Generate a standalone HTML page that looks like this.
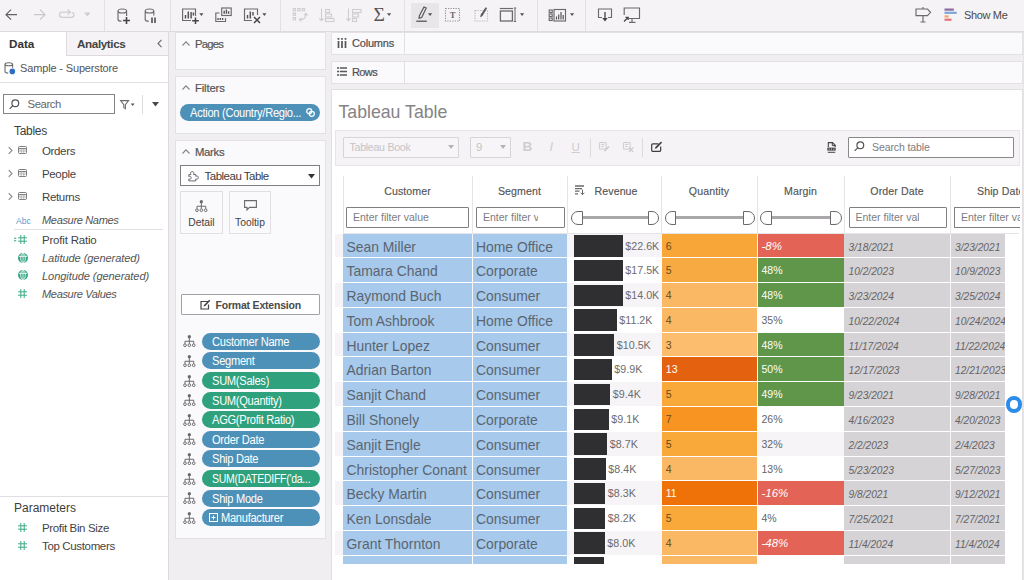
<!DOCTYPE html>
<html lang="en">
<head>
<meta charset="utf-8">
<title>Tableau Table</title>
<style>
*{box-sizing:border-box}
html,body{margin:0;padding:0}
body{width:1024px;height:580px;overflow:hidden;position:relative;background:#f0eef1;font-family:"Liberation Sans",sans-serif;font-size:11.5px;color:#4a4a4a}
.abs,.ic{position:absolute}
.ic{overflow:visible}
#toolbar{position:absolute;left:0;top:0;width:1024px;height:32px;background:#f5f3f6;border-bottom:1px solid #dcdadd}
.tsep{position:absolute;top:0;width:1px;height:31px;background:#e2e0e3}
#left{position:absolute;left:0;top:32px;width:169px;height:548px;background:#fff;border-right:1px solid #dcdadd}
.t{position:absolute;white-space:nowrap;line-height:14px}
.card{position:absolute;background:#faf9fb;border:1px solid #e3e1e4}
.row{position:absolute;left:335px;width:670px}
.c{position:absolute;top:0;height:100%;white-space:nowrap;overflow:hidden}
.bl{background:#a6c9ec;font-size:13.9px;color:#5b6570;padding-left:3.5px;line-height:27px}
.bar{position:absolute;left:238.5px;top:1.5px;height:21.5px;background:#2f2e31}
.bv{position:absolute;top:0;line-height:25.600px;font-size:10.700px;color:#6d6b6e}
.q{font-size:10.5px;padding-left:4.300px;line-height:25.600px}
.m{left:422.5px;width:86.5px;font-size:10.5px;padding-left:4px;line-height:25.600px}
.d{background:#d5d3d6;font-size:10.2px;font-style:italic;color:#656366;padding-left:4.5px;line-height:27px}
.pill{position:absolute;left:202px;width:118px;height:17px;border-radius:8.5px;color:#fff;font-size:12px;line-height:18.400px;padding-left:9.7px;white-space:nowrap;overflow:hidden;letter-spacing:-.3px}
.pill .s{display:inline-block;transform:scaleX(.925);transform-origin:0 50%}
.hl{position:absolute;top:176px;width:1px;height:57px;background:#e6e4e7}
.hd{position:absolute;top:184px;font-size:10.6px;color:#555;-webkit-text-stroke:.15px #555;text-align:center;line-height:14px;white-space:nowrap;letter-spacing:.1px}
.fi{position:absolute;top:207px;height:20.5px;border:1px solid #807e81;background:#fff;font-size:10.5px;color:#7d7b7e;line-height:18.5px;padding-left:6px;white-space:nowrap;overflow:hidden;border-radius:1px}
.sl{position:absolute;top:216.2px;height:2.6px;background:#a9a7aa}
.hL,.hR{position:absolute;top:210.5px;width:11.5px;height:14px;border:1.3px solid #6a686b;background:#fff}
.hL{border-radius:7px 0 0 7px}
.hR{border-radius:0 7px 7px 0}
</style>
</head>
<body>


<!-- ================= TOOLBAR ================= -->
<div id="toolbar">
<div class="tsep" style="left:104px"></div>
<div class="tsep" style="left:170px"></div>
<div class="tsep" style="left:280px"></div>
<div class="tsep" style="left:404px"></div>
<div class="tsep" style="left:537px"></div>
<div class="tsep" style="left:585px"></div>
<div class="abs" style="left:410.5px;top:2.5px;width:28px;height:25px;background:#e8e6e9"></div>
<svg class="ic" style="left:0;top:0" width="1024" height="31" viewBox="0 0 1024 31" fill="none" stroke="#6b696c" stroke-width="1.15">
<!-- back -->
<path d="M17 14.700H6.300M11 9.700l-5 5 5 5" stroke="#646265" stroke-width="1.200"/>
<!-- forward -->
<path d="M34 14.700h10.700M40 9.700l5 5-5 5" stroke="#c9c7ca" stroke-width="1.200"/>
<!-- redo -->
<path d="M70.500 12.200h-8c-1.800 0-3 1.100-3 2.600s1.200 2.600 3 2.600h8.500c1.800 0 3-1.100 3-2.600 0-1.200-.700-2-1.800-2.400M67.500 9.500l3 2.700-3 2.700" stroke="#cfcdd0" stroke-width="1.200"/>
<path d="M84 12.500h6.500l-3.250 4z" fill="#cfcdd0" stroke="none"/>
<!-- new datasource -->
<path d="M118 11v8.500c0 1 1.600 1.700 3.600 1.800M118 11c0-1.200 1.900-2 4.300-2s4.300.800 4.300 2v5M118 11c0 1.200 1.900 2 4.300 2s4.300-.800 4.300-2" />
<path d="M126.500 17v7M123 20.500h7" stroke="#444" stroke-width="1.600"/>
<!-- pause datasource -->
<path d="M145.200 11v8.500c0 1 1.600 1.700 3.600 1.800M145.200 11c0-1.200 1.900-2 4.300-2s4.300.800 4.300 2v4.500M145.200 11c0 1.200 1.900 2 4.300 2s4.300-.800 4.300-2" />
<path d="M152 17.500v5.500M155 17.500v5.500" stroke="#444" stroke-width="1.500"/>
<!-- new worksheet -->
<path d="M195.500 16V9H182.600v11.500H191" />
<path d="M185.500 18.500v-3.500M188.300 18.500v-7M191.100 18.500v-6.500M193.400 15.500v-3" stroke="#555" stroke-width="1.500"/>
<path d="M195.500 17.500v6.500M192.200 20.700h6.600" stroke="#444" stroke-width="1.500"/>
<path d="M199.300 13.300h4.200l-2.100 2.700z" fill="#555" stroke="none"/>
<!-- duplicate -->
<rect x="221.700" y="8" width="9.500" height="7.500"/>
<path d="M224.200 13.800v-3M226.400 13.800v-4.300M228.600 13.800v-2.500" stroke="#555" stroke-width="1.400"/>
<path d="M219.500 13h-3.700v8.500h9.700v-3.500"/>
<path d="M218 20v-2M220.300 20v-2M222.600 20v-2" stroke="#555" stroke-width="1.400"/>
<!-- clear -->
<path d="M257.500 15V9H244.500v11.500H252" />
<path d="M247.500 18.500v-3.500M250.300 18.500v-7M253 15.500v-3.500" stroke="#555" stroke-width="1.500"/>
<path d="M254 17l6 6M260 17l-6 6" stroke="#444" stroke-width="1.500"/>
<path d="M262.300 13.300h4.200l-2.100 2.700z" fill="#555" stroke="none"/>
<!-- swap (disabled) -->
<g stroke="#cfcdd0" stroke-width="1.100">
<rect x="293.200" y="8.500" width="2.300" height="2.300"/><rect x="297.700" y="8.500" width="2.300" height="2.300"/><rect x="302.200" y="8.500" width="2.300" height="2.300"/>
<rect x="293.200" y="13" width="2.300" height="2.300"/><rect x="293.200" y="17.500" width="2.300" height="2.300"/>
<path d="M306 13.500c0 4-2.500 6.300-6.500 6.300M304 15.500l2-2.300 1.600 2.500M301.500 17.800l-2.200 2 2.400 1.800"/>
<!-- sort asc -->
<path d="M321.500 8.500v12M319.300 18.300l2.200 2.400 2.200-2.400"/>
<rect x="325.500" y="9.500" width="4" height="3"/><rect x="325.500" y="14" width="6" height="3"/><rect x="325.500" y="18.500" width="8.500" height="3"/>
<!-- sort desc -->
<path d="M348.500 8.500v12M346.300 18.300l2.200 2.400 2.200-2.400"/>
<rect x="352.500" y="9.500" width="8.500" height="3"/><rect x="352.500" y="14" width="6" height="3"/><rect x="352.500" y="18.500" width="4" height="3"/>
</g>
<!-- sigma dropdown tri -->
<path d="M387 13.300h4.200l-2.100 2.700z" fill="#555" stroke="none"/>
<!-- pen -->
<path d="M424 7l2.200 1-4.500 9.500-2.700.800.500-2.800z" stroke="#555"/>
<path d="M416.300 21.200h10.500" stroke="#555" stroke-width="1.300"/>
<path d="M428 13.300h4.200l-2.100 2.700z" fill="#555" stroke="none"/>
<!-- T box -->
<rect x="445.500" y="8.500" width="14" height="12.500" stroke="#959396" stroke-dasharray="1.300 1.200"/>
<!-- annotate -->
<rect x="475" y="10.500" width="12.500" height="10.500" stroke="#bbb9bc" stroke-dasharray="1.300 1.200"/>
<path d="M486.800 8.300l-4.300 7.200-1.900 1.500.4-2.400L485.700 7.600z" fill="#5a585b" stroke="#5a585b" stroke-width=".5"/>
<!-- fit -->
<path d="M499.800 8.500h13.200"/><rect x="500.400" y="11" width="12" height="10" stroke-width="1.300"/><path d="M515 8v13.500M513.800 8h2.400M513.800 21.500h2.400" stroke-width="1"/>
<path d="M520 13.300h4.200l-2.100 2.700z" fill="#555" stroke="none"/>
<!-- show cards -->
<rect x="549.200" y="10" width="3" height="2.500"/><rect x="549.200" y="14" width="3" height="2.500"/><rect x="549.200" y="18" width="3" height="2.500"/>
<rect x="554" y="9.500" width="11.500" height="11.500"/>
<path d="M556.500 19.500v-3M558.700 19.500v-5M561 19.500v-7.500M563.200 19.500v-4.500" stroke="#555" stroke-width="1.200"/>
<path d="M570 13.300h4.200l-2.100 2.700z" fill="#555" stroke="none"/>
<!-- download -->
<path d="M602 17.500h-3.500V9h13v8.500H608"/><path d="M605 12v8" stroke="#444" stroke-width="1.300"/><path d="M602.300 18h5.400l-2.700 3.500z" fill="#444" stroke="none"/>
<!-- monitor -->
<path d="M624.200 15V8h15.300v10.500H629"/><path d="M632 18.500v3.500M629 22.300h6.500"/><path d="M624 21.500l4-4M625.500 17.300h2.700v2.700" stroke="#444" stroke-width="1.200"/>
<!-- signpost -->
<path d="M923 7v2M916 9h11.500l3 3.300-3 3.300H916zM923 15.600v6.400M920.500 22h5"/>
<!-- show me -->
<g stroke="none"><rect x="944.500" y="8.500" width="9.300" height="2.200" fill="#8b6aa0"/><rect x="944.500" y="11.700" width="12.200" height="2.200" fill="#7ba6d8"/><rect x="944.500" y="15.300" width="4.200" height="2.200" fill="#f0a868"/><rect x="944.500" y="18.600" width="7" height="2.200" fill="#e8707a"/></g>
</svg>
<div class="t" style="left:373.500px;top:5px;font-size:19.500px;line-height:20px;color:#555;font-family:'Liberation Serif',serif">Σ</div>
<div class="t" style="left:449.700px;top:9px;font-size:8.800px;line-height:12px;color:#6b696c;font-weight:bold;font-family:'Liberation Serif',serif">T</div>

<div class="t" style="left:964px;top:8px;font-size:11px;color:#4a4a4a;letter-spacing:-.35px">Show Me</div>
</div>

<!-- ================= LEFT PANE ================= -->
<div id="left"></div>
<div class="abs" style="left:65.5px;top:32px;width:102.700px;height:24px;background:#f5f3f6;border-left:1px solid #dcdadd;border-bottom:1px solid #dcdadd"></div>
<div class="t" style="left:9px;top:37px;font-size:11.7px;font-weight:bold;color:#333">Data</div>
<div class="t" style="left:77px;top:37px;font-size:11.7px;font-weight:bold;color:#444;letter-spacing:-.4px">Analytics</div>
<svg class="ic" style="left:157px;top:39px" width="6" height="9" viewBox="0 0 6 9"><path d="M4.5 .8L1 4.5l3.5 3.7" fill="none" stroke="#6b696c" stroke-width="1.1"/></svg>
<!-- datasource -->
<svg class="ic" style="left:3.5px;top:62px" width="12" height="13" viewBox="0 0 12 13"><path d="M1 2.3v7.2c0 .9 1.4 1.5 3.2 1.6M1 2.3C1 1.4 2.7.8 4.8.8s3.8.6 3.8 1.5S6.900 3.800 4.800 3.800 1 3.200 1 2.300zM8.600 2.300v3.500" fill="none" stroke="#6b696c" stroke-width="1.1"/><circle cx="8.300" cy="9.400" r="2.800" fill="#2f6fc0"/></svg>
<div class="t" style="left:20px;top:61px;font-size:11px;color:#555;letter-spacing:-.15px">Sample - Superstore</div>
<div class="abs" style="left:0;top:82px;width:168px;height:1px;background:#e1dfe2"></div>
<!-- search -->
<div class="abs" style="left:3px;top:94px;width:111.500px;height:20px;border:1px solid #858386;background:#fff"></div>
<svg class="ic" style="left:8.5px;top:99px" width="10.500" height="10.500" viewBox="0 0 10.5 10.5"><g fill="none" stroke="#555" stroke-width="1.2"><circle cx="6.3" cy="4.2" r="3.4"/><path d="M3.9 6.6L.6 9.9"/></g></svg>
<div class="t" style="left:27.5px;top:97px;font-size:11.3px;color:#666;letter-spacing:-.4px">Search</div>
<svg class="ic" style="left:120px;top:99.500px" width="16" height="10" viewBox="0 0 16 10"><path d="M.6.6h8L5.400 4.600v4.200L3.800 7.600V4.600z" fill="none" stroke="#6b696c" stroke-width="1.050"/><path d="M10.800 3.600h3.800l-1.900 2.300z" fill="#555"/></svg>
<div class="abs" style="left:141.5px;top:95px;width:1px;height:18.500px;background:#dcdadd"></div>
<svg class="ic" style="left:152px;top:102px" width="7" height="5" viewBox="0 0 7 5"><path d="M0 0h7L3.500 4.500z" fill="#4a4a4a"/></svg>
<div class="t" style="left:14px;top:123.5px;font-size:12px;color:#3d3d3d;letter-spacing:-.3px">Tables</div>
<!-- tables -->
<svg class="ic" style="left:7.5px;top:145.5px" width="5" height="9" viewBox="0 0 5 9"><g fill="none" stroke="#8a888b" stroke-width="1.100"><path d="M.700 1.200l3.300 3.300-3.300 3.300"/></g></svg>
<svg class="ic" style="left:18px;top:146px" width="9" height="8" viewBox="0 0 9 8"><g fill="none" stroke="#7d7b7e" stroke-width="1"><rect x=".5" y=".5" width="8" height="7" rx="1"/><path d="M.5 2.600h8" stroke-width="1.100"/><path d="M.5 5h8M3.200 2.700v5M5.800 2.700v5" stroke-width=".7" stroke="#9b999c"/></g></svg>
<div class="t" style="left:42px;top:143.500px;color:#444;letter-spacing:-.35px">Orders</div>
<svg class="ic" style="left:7.5px;top:168.5px" width="5" height="9" viewBox="0 0 5 9"><g fill="none" stroke="#8a888b" stroke-width="1.100"><path d="M.700 1.200l3.300 3.300-3.300 3.300"/></g></svg>
<svg class="ic" style="left:18px;top:169px" width="9" height="8" viewBox="0 0 9 8"><g fill="none" stroke="#7d7b7e" stroke-width="1"><rect x=".5" y=".5" width="8" height="7" rx="1"/><path d="M.5 2.600h8" stroke-width="1.100"/><path d="M.5 5h8M3.200 2.700v5M5.800 2.700v5" stroke-width=".7" stroke="#9b999c"/></g></svg>
<div class="t" style="left:42px;top:166.500px;color:#444;letter-spacing:-.35px">People</div>
<svg class="ic" style="left:7.5px;top:191.5px" width="5" height="9" viewBox="0 0 5 9"><g fill="none" stroke="#8a888b" stroke-width="1.100"><path d="M.700 1.200l3.300 3.300-3.300 3.300"/></g></svg>
<svg class="ic" style="left:18px;top:192px" width="9" height="8" viewBox="0 0 9 8"><g fill="none" stroke="#7d7b7e" stroke-width="1"><rect x=".5" y=".5" width="8" height="7" rx="1"/><path d="M.5 2.600h8" stroke-width="1.100"/><path d="M.5 5h8M3.200 2.700v5M5.800 2.700v5" stroke-width=".7" stroke="#9b999c"/></g></svg>
<div class="t" style="left:42px;top:189.500px;color:#444;letter-spacing:-.35px">Returns</div>
<div class="t" style="left:16px;top:213.600px;font-size:8.500px;color:#5b9bd0">Abc</div>
<div class="t" style="left:42px;top:212.800px;font-style:italic;color:#555;font-size:11.100px;letter-spacing:-.38px">Measure Names</div>
<div class="abs" style="left:14px;top:229px;width:149px;height:1px;background:#e1dfe2"></div>
<svg class="ic" style="left:13.500px;top:235px" width="13" height="9" viewBox="0 0 13 9"><path d="M0 3.300h2.200M0 5.700h2.200" stroke="#2fa27d" stroke-width="1.100"/><g transform="translate(4 0)"><g fill="none" stroke="#35a583" stroke-width=".95"><path d="M2.8 0v9M6.2 0v9M0 2.8h9M0 6.2h9"/></g></g></svg>
<div class="t" style="left:42px;top:232.700px;color:#444;letter-spacing:-.2px">Profit Ratio</div>
<svg class="ic" style="left:17.500px;top:252.500px" width="10" height="10" viewBox="0 0 10 10"><g fill="none" stroke="#fff" stroke-width=".8"><circle cx="5" cy="5" r="5" fill="#35a583" stroke="none"/><ellipse cx="5" cy="5" rx="2.300" ry="4.400"/><path d="M5 .600v8.800M.900 3.400h8.200"/></g></svg>
<div class="t" style="left:42px;top:250.700px;font-style:italic;color:#555;font-size:11.100px;letter-spacing:-.1px">Latitude (generated)</div>
<svg class="ic" style="left:17.500px;top:270px" width="10" height="10" viewBox="0 0 10 10"><g fill="none" stroke="#fff" stroke-width=".8"><circle cx="5" cy="5" r="5" fill="#35a583" stroke="none"/><ellipse cx="5" cy="5" rx="2.300" ry="4.400"/><path d="M5 .600v8.800M.900 3.400h8.200"/></g></svg>
<div class="t" style="left:42px;top:268.700px;font-style:italic;color:#555;font-size:11.100px;letter-spacing:-.1px">Longitude (generated)</div>
<svg class="ic" style="left:17.500px;top:288.500px" width="9" height="9" viewBox="0 0 9 9"><g fill="none" stroke="#35a583" stroke-width=".95"><path d="M2.8 0v9M6.2 0v9M0 2.8h9M0 6.2h9"/></g></svg>
<div class="t" style="left:42px;top:286.700px;font-style:italic;color:#555;font-size:11.100px;letter-spacing:-.38px">Measure Values</div>
<!-- parameters -->
<div class="abs" style="left:0;top:495.500px;width:168px;height:1px;background:#e1dfe2"></div>
<div class="t" style="left:14px;top:500.500px;font-size:12px;color:#3d3d3d">Parameters</div>
<svg class="ic" style="left:17.500px;top:523px" width="9" height="9" viewBox="0 0 9 9"><g fill="none" stroke="#35a583" stroke-width=".95"><path d="M2.8 0v9M6.2 0v9M0 2.8h9M0 6.2h9"/></g></svg>
<div class="t" style="left:42px;top:520.500px;color:#444;letter-spacing:-.35px">Profit Bin Size</div>
<svg class="ic" style="left:17.500px;top:541px" width="9" height="9" viewBox="0 0 9 9"><g fill="none" stroke="#35a583" stroke-width=".95"><path d="M2.8 0v9M6.2 0v9M0 2.8h9M0 6.2h9"/></g></svg>
<div class="t" style="left:42px;top:538.500px;color:#444;letter-spacing:-.35px">Top Customers</div>

<!-- ================= CARDS ================= -->
<div class="card" style="left:174.500px;top:32px;width:151px;height:38px"></div>
<svg class="ic" style="left:182px;top:41px" width="8" height="5.500" viewBox="0 0 8 5.500"><g fill="none" stroke="#858386" stroke-width="1.100"><path d="M.5 4.5l3.5-3.7 3.5 3.7"/></g></svg>
<div class="t" style="left:195px;top:36.500px;font-size:11.300px;color:#555;letter-spacing:-.8px;-webkit-text-stroke:.2px #555">Pages</div>
<div class="card" style="left:174.500px;top:76px;width:151px;height:58px"></div>
<svg class="ic" style="left:182px;top:85px" width="8" height="5.500" viewBox="0 0 8 5.500"><g fill="none" stroke="#858386" stroke-width="1.100"><path d="M.5 4.5l3.5-3.7 3.5 3.7"/></g></svg>
<div class="t" style="left:195px;top:80.500px;font-size:11.300px;color:#555;letter-spacing:-.15px;-webkit-text-stroke:.2px #555">Filters</div>
<div class="pill" style="left:180px;top:104.200px;width:140px;background:#4e91b8"><span class="s">Action (Country/Regio...</span><svg width="9" height="9" viewBox="0 0 9 9" style="position:absolute;right:5.500px;top:4px"><circle cx="3.200" cy="3.200" r="2.500" fill="none" stroke="#fff" stroke-width="1.250"/><circle cx="5.800" cy="5.800" r="2.500" fill="none" stroke="#fff" stroke-width="1.250"/></svg></div>
<div class="card" style="left:174.500px;top:140px;width:151px;height:399px"></div>
<svg class="ic" style="left:182px;top:149px" width="8" height="5.500" viewBox="0 0 8 5.500"><g fill="none" stroke="#858386" stroke-width="1.100"><path d="M.5 4.5l3.5-3.7 3.5 3.7"/></g></svg>
<div class="t" style="left:195px;top:144.500px;font-size:11.300px;color:#555;letter-spacing:-.3px;-webkit-text-stroke:.2px #555">Marks</div>
<div class="abs" style="left:180px;top:165px;width:140px;height:20.500px;border:1px solid #807e81;background:#fff"></div>
<svg class="ic" style="left:187.500px;top:170.500px" width="10.500" height="10.500" viewBox="0 0 10.500 10.500"><path d="M.800 3.600h2.100c-.9-1.600-.1-3 1.300-3s2.200 1.400 1.300 3h2.300v1.700c1.500-.8 2.500.1 2.500 1.300s-1.200 2.100-2.500 1.300v2H.800V8c1.500.6 2.400-.2 2.400-1.300S2.200 4.900.800 5.500z" fill="none" stroke="#6b696c" stroke-width="1"/></svg>
<div class="t" style="left:204.500px;top:168.500px;font-size:11.500px;color:#3d3d3d;letter-spacing:-.5px">Tableau Table</div>
<svg class="ic" style="left:308px;top:174px" width="7" height="5" viewBox="0 0 7 5"><path d="M0 0h7L3.500 4.500z" fill="#333"/></svg>
<div class="abs" style="left:180px;top:191px;width:42.500px;height:42.500px;border:1px solid #e1dfe2;background:#faf9fb"></div>
<div class="abs" style="left:228.500px;top:191px;width:42.500px;height:42.500px;border:1px solid #e1dfe2;background:#faf9fb"></div>
<svg class="ic" style="left:195.200px;top:200px" width="12.700" height="12" viewBox="0 0 12.200 11.500"><g fill="none" stroke="#6b696c" stroke-width=".95"><circle cx="6.100" cy="1.700" r="1.600" fill="#6b696c" stroke="none"/><path d="M6.100 3v3M1.900 8.300V6h8.400v2.300M6.100 6v2.300"/><circle cx="1.900" cy="9.800" r="1.300"/><circle cx="6.100" cy="9.800" r="1.300"/><circle cx="10.300" cy="9.800" r="1.300"/></g></svg>
<div class="t" style="left:180.500px;top:215.800px;width:42px;text-align:center;font-size:10.300px;color:#444">Detail</div>
<svg class="ic" style="left:243.500px;top:199.500px" width="13" height="11" viewBox="0 0 13 11"><path d="M.6.6h11.800v6.800H5.500L3 10V7.400H.6z" fill="none" stroke="#6b696c" stroke-width="1.100"/></svg>
<div class="t" style="left:229px;top:215.800px;width:42px;text-align:center;font-size:10.300px;color:#444">Tooltip</div>
<div class="abs" style="left:180.500px;top:294px;width:139.500px;height:20.500px;border:1px solid #a3a1a4;background:#fff;border-radius:1px"></div>
<svg class="ic" style="left:199.500px;top:299px" width="11" height="11" viewBox="0 0 11 11"><path d="M8 2.500H1v7.500h7.500V5.500" fill="none" stroke="#444" stroke-width="1.200"/><path d="M3.500 7.500l1.800-.4L10.300 1.800 9.200.7 4 6z" fill="#444"/></svg>
<div class="t" style="left:215.500px;top:297.500px;font-size:10.5px;font-weight:bold;color:#4a4a4a;letter-spacing:-.2px">Format Extension</div>
<svg class="ic" style="left:183px;top:335.30px" width="12.700" height="12" viewBox="0 0 12.200 11.500"><g fill="none" stroke="#6b696c" stroke-width=".95"><circle cx="6.100" cy="1.700" r="1.600" fill="#6b696c" stroke="none"/><path d="M6.100 3v3M1.900 8.300V6h8.400v2.300M6.100 6v2.300"/><circle cx="1.900" cy="9.800" r="1.300"/><circle cx="6.100" cy="9.800" r="1.300"/><circle cx="10.300" cy="9.800" r="1.300"/></g></svg>
<div class="pill" style="top:332.80px;background:#4e91b8"><span class="s" style="">Customer Name</span></div>
<svg class="ic" style="left:183px;top:354.91px" width="12.700" height="12" viewBox="0 0 12.200 11.500"><g fill="none" stroke="#6b696c" stroke-width=".95"><circle cx="6.100" cy="1.700" r="1.600" fill="#6b696c" stroke="none"/><path d="M6.100 3v3M1.900 8.300V6h8.400v2.300M6.100 6v2.300"/><circle cx="1.900" cy="9.800" r="1.300"/><circle cx="6.100" cy="9.800" r="1.300"/><circle cx="10.300" cy="9.800" r="1.300"/></g></svg>
<div class="pill" style="top:352.41px;background:#4e91b8"><span class="s" style="">Segment</span></div>
<svg class="ic" style="left:183px;top:374.52px" width="12.700" height="12" viewBox="0 0 12.200 11.500"><g fill="none" stroke="#6b696c" stroke-width=".95"><circle cx="6.100" cy="1.700" r="1.600" fill="#6b696c" stroke="none"/><path d="M6.100 3v3M1.900 8.300V6h8.400v2.300M6.100 6v2.300"/><circle cx="1.900" cy="9.800" r="1.300"/><circle cx="6.100" cy="9.800" r="1.300"/><circle cx="10.300" cy="9.800" r="1.300"/></g></svg>
<div class="pill" style="top:372.02px;background:#2fa27d"><span class="s" style="">SUM(Sales)</span></div>
<svg class="ic" style="left:183px;top:394.13px" width="12.700" height="12" viewBox="0 0 12.200 11.500"><g fill="none" stroke="#6b696c" stroke-width=".95"><circle cx="6.100" cy="1.700" r="1.600" fill="#6b696c" stroke="none"/><path d="M6.100 3v3M1.900 8.300V6h8.400v2.300M6.100 6v2.300"/><circle cx="1.900" cy="9.800" r="1.300"/><circle cx="6.100" cy="9.800" r="1.300"/><circle cx="10.300" cy="9.800" r="1.300"/></g></svg>
<div class="pill" style="top:391.63px;background:#2fa27d"><span class="s" style="">SUM(Quantity)</span></div>
<svg class="ic" style="left:183px;top:413.74px" width="12.700" height="12" viewBox="0 0 12.200 11.500"><g fill="none" stroke="#6b696c" stroke-width=".95"><circle cx="6.100" cy="1.700" r="1.600" fill="#6b696c" stroke="none"/><path d="M6.100 3v3M1.900 8.300V6h8.400v2.300M6.100 6v2.300"/><circle cx="1.900" cy="9.800" r="1.300"/><circle cx="6.100" cy="9.800" r="1.300"/><circle cx="10.300" cy="9.800" r="1.300"/></g></svg>
<div class="pill" style="top:411.24px;background:#2fa27d"><span class="s" style="">AGG(Profit Ratio)</span></div>
<svg class="ic" style="left:183px;top:433.35px" width="12.700" height="12" viewBox="0 0 12.200 11.500"><g fill="none" stroke="#6b696c" stroke-width=".95"><circle cx="6.100" cy="1.700" r="1.600" fill="#6b696c" stroke="none"/><path d="M6.100 3v3M1.900 8.300V6h8.400v2.300M6.100 6v2.300"/><circle cx="1.900" cy="9.800" r="1.300"/><circle cx="6.100" cy="9.800" r="1.300"/><circle cx="10.300" cy="9.800" r="1.300"/></g></svg>
<div class="pill" style="top:430.85px;background:#4e91b8"><span class="s" style="">Order Date</span></div>
<svg class="ic" style="left:183px;top:452.96px" width="12.700" height="12" viewBox="0 0 12.200 11.500"><g fill="none" stroke="#6b696c" stroke-width=".95"><circle cx="6.100" cy="1.700" r="1.600" fill="#6b696c" stroke="none"/><path d="M6.100 3v3M1.900 8.300V6h8.400v2.300M6.100 6v2.300"/><circle cx="1.900" cy="9.800" r="1.300"/><circle cx="6.100" cy="9.800" r="1.300"/><circle cx="10.300" cy="9.800" r="1.300"/></g></svg>
<div class="pill" style="top:450.46px;background:#4e91b8"><span class="s" style="">Ship Date</span></div>
<svg class="ic" style="left:183px;top:472.57px" width="12.700" height="12" viewBox="0 0 12.200 11.500"><g fill="none" stroke="#6b696c" stroke-width=".95"><circle cx="6.100" cy="1.700" r="1.600" fill="#6b696c" stroke="none"/><path d="M6.100 3v3M1.900 8.300V6h8.400v2.300M6.100 6v2.300"/><circle cx="1.900" cy="9.800" r="1.300"/><circle cx="6.100" cy="9.800" r="1.300"/><circle cx="10.300" cy="9.800" r="1.300"/></g></svg>
<div class="pill" style="top:470.07px;background:#2fa27d"><span class="s" style=";transform:scaleX(.875)">SUM(DATEDIFF('da...</span></div>
<svg class="ic" style="left:183px;top:492.18px" width="12.700" height="12" viewBox="0 0 12.200 11.500"><g fill="none" stroke="#6b696c" stroke-width=".95"><circle cx="6.100" cy="1.700" r="1.600" fill="#6b696c" stroke="none"/><path d="M6.100 3v3M1.900 8.300V6h8.400v2.300M6.100 6v2.300"/><circle cx="1.900" cy="9.800" r="1.300"/><circle cx="6.100" cy="9.800" r="1.300"/><circle cx="10.300" cy="9.800" r="1.300"/></g></svg>
<div class="pill" style="top:489.68px;background:#4e91b8"><span class="s" style="">Ship Mode</span></div>
<svg class="ic" style="left:183px;top:511.79px" width="12.700" height="12" viewBox="0 0 12.200 11.500"><g fill="none" stroke="#6b696c" stroke-width=".95"><circle cx="6.100" cy="1.700" r="1.600" fill="#6b696c" stroke="none"/><path d="M6.100 3v3M1.900 8.300V6h8.400v2.300M6.100 6v2.300"/><circle cx="1.900" cy="9.800" r="1.300"/><circle cx="6.100" cy="9.800" r="1.300"/><circle cx="10.300" cy="9.800" r="1.300"/></g></svg>
<div class="pill" style="top:509.29px;background:#4e91b8"><svg width="9" height="9" viewBox="0 0 9 9" style="position:absolute;left:6.500px;top:4px"><rect x=".5" y=".5" width="8" height="8" fill="none" stroke="#fff"/><path d="M2.500 4.500h4M4.500 2.500v4" stroke="#fff"/></svg><span class="s" style="margin-left:9px">Manufacturer</span></div>

<!-- ================= SHELVES ================= -->
<div class="card" style="left:331px;top:32px;width:692px;height:23px"></div>
<div class="abs" style="left:404px;top:33px;width:1px;height:21px;background:#e1dfe2"></div>
<svg class="ic" style="left:337px;top:37.600px" width="10" height="10" viewBox="0 0 10 10"><path d="M1.500 3v7M5 3v7M8.500 3v7" stroke="#555" stroke-width="1.700"/><path d="M1.500 0v1.800M5 0v1.800M8.500 0v1.800" stroke="#555" stroke-width="1.700"/></svg>
<div class="t" style="left:352px;top:35.800px;font-size:11px;color:#4f4d50;-webkit-text-stroke:.2px #4f4d50;letter-spacing:-.2px">Columns</div>
<div class="card" style="left:331px;top:61px;width:692px;height:23px"></div>
<div class="abs" style="left:404px;top:62px;width:1px;height:21px;background:#e1dfe2"></div>
<svg class="ic" style="left:337px;top:67.200px" width="10" height="9" viewBox="0 0 10 9"><path d="M2.800 1h7.200M2.800 4.500h7.200M2.800 8h7.200" stroke="#5a585b" stroke-width="1.700"/><path d="M0 1h2M0 4.500h2M0 8h2" stroke="#5a585b" stroke-width="1.700"/></svg>
<div class="t" style="left:352px;top:64.800px;font-size:11px;color:#4f4d50;-webkit-text-stroke:.2px #4f4d50;letter-spacing:-.6px">Rows</div>

<!-- ================= VIEW ================= -->
<div class="abs" style="left:331px;top:89px;width:692px;height:492px;background:#fff;border:1px solid #e1dfe2;border-bottom:none"></div>
<div class="t" style="left:338.500px;top:99.700px;font-size:17.700px;line-height:24px;color:#858385">Tableau Table</div>
<!-- table toolbar -->
<div class="abs" style="left:335px;top:130px;width:685px;height:35.500px;background:#f5f3f6;border:1px solid #e6e4e7"></div>
<div class="abs" style="left:342.500px;top:137px;width:116.500px;height:20.500px;border:1px solid #d6d4d7;background:#f7f5f8;border-radius:1px"></div>
<div class="t" style="left:349.500px;top:139.800px;font-size:10.600px;color:#c5c3c6;letter-spacing:-.27px">Tableau Book</div>
<svg class="ic" style="left:448px;top:145px" width="6" height="4.500" viewBox="0 0 6 4.500"><path d="M0 0h6L3 4z" fill="#b5b3b6"/></svg>
<div class="abs" style="left:469.500px;top:137px;width:41px;height:20.500px;border:1px solid #d6d4d7;background:#f7f5f8;border-radius:1px"></div>
<div class="t" style="left:476px;top:139.800px;font-size:11.300px;color:#c5c3c6">9</div>
<svg class="ic" style="left:499.500px;top:145px" width="6" height="4.500" viewBox="0 0 6 4.500"><path d="M0 0h6L3 4z" fill="#b5b3b6"/></svg>
<div class="t" style="left:522.500px;top:138.500px;font-size:13.500px;font-weight:bold;color:#cfcdd0;line-height:16px">B</div>
<div class="t" style="left:549.500px;top:138.500px;font-size:13px;font-style:italic;color:#cfcdd0;line-height:16px">I</div>
<div class="t" style="left:571.500px;top:139px;font-size:11.500px;color:#cfcdd0;line-height:16px;text-decoration:underline">U</div>
<div class="abs" style="left:590px;top:138px;width:1px;height:18.500px;background:#dddbde"></div>
<svg class="ic" style="left:598.500px;top:142px" width="11" height="11" viewBox="0 0 11 11"><path d="M.600.600h6.500v6.500H.600z" fill="none" stroke="#cdcbce" stroke-width="1"/><path d="M2.200 2.500h3.200M2.200 4.500h2.500" stroke="#cdcbce" stroke-width=".9"/><path d="M5 9.500l1.500-.3 4-4.200-1.100-1.100-4.100 4.200z" fill="#cdcbce"/></svg>
<svg class="ic" style="left:622.500px;top:142px" width="11" height="11" viewBox="0 0 11 11"><path d="M.600.600h6.500v6.500H.600z" fill="none" stroke="#cdcbce" stroke-width="1"/><path d="M2.200 2.500h3.200M2.200 4.500h2.500" stroke="#cdcbce" stroke-width=".9"/><path d="M6 5.500l4.200 4.500M10.200 5.500L6 10" stroke="#cdcbce" stroke-width="1.100"/></svg>
<div class="abs" style="left:642px;top:138px;width:1px;height:18.500px;background:#dddbde"></div>
<svg class="ic" style="left:651px;top:141px" width="11.500" height="11" viewBox="0 0 11.500 11"><path d="M7.500 2.800H1.700c-.6 0-1 .4-1 1v5.500c0 .6.400 1 1 1h7c.6 0 1-.4 1-1V5.500" fill="none" stroke="#3d3d3d" stroke-width="1.200"/><path d="M3.800 7.700l1.900-.5L11 1.700 10 .6 4.400 5.900z" fill="#3d3d3d"/></svg>
<svg class="ic" style="left:826.500px;top:141.500px" width="9" height="11" viewBox="0 0 9 11"><path d="M1.300 5V.600h4.200l2.700 2.700V5" fill="none" stroke="#444" stroke-width="1.100"/><path d="M5.300.600v3h3" fill="none" stroke="#444" stroke-width="1"/><rect x=".3" y="5.600" width="8.400" height="3" fill="#444"/><path d="M2.200 6.300v1.600M4.500 6.300v1.600M6.800 6.300v1.600" stroke="#f5f3f6" stroke-width=".6"/><path d="M.800 10.300h7.400" stroke="#444" stroke-width="1"/></svg>
<div class="abs" style="left:848px;top:137px;width:165.500px;height:20.500px;border:1px solid #8a888b;background:#fff;border-radius:1px"></div>
<svg class="ic" style="left:853.500px;top:141.300px" width="10.500" height="10.500" viewBox="0 0 10.500 10.500"><g fill="none" stroke="#555" stroke-width="1.2"><circle cx="6.3" cy="4.2" r="3.4"/><path d="M3.9 6.6L.6 9.9"/></g></svg>
<div class="t" style="left:872px;top:139.600px;font-size:10.500px;color:#7d7b7e;letter-spacing:-.1px">Search table</div>

<!-- header -->
<div class="hl" style="left:342.500px"></div>
<div class="hl" style="left:472px"></div>
<div class="hl" style="left:567px"></div>
<div class="hl" style="left:661px"></div>
<div class="hl" style="left:757px"></div>
<div class="hl" style="left:844px"></div>
<div class="hl" style="left:950px"></div>
<div class="abs" style="left:343px;top:232.500px;width:676px;height:1px;background:#e6e4e7"></div>
<div class="hd" style="left:343px;width:129px">Customer</div>
<div class="hd" style="left:472px;width:95px">Segment</div>
<svg class="ic" style="left:575px;top:185px" width="10" height="10" viewBox="0 0 10 10"><path d="M0 1h9M0 3.600h7M0 6.200h4.500M0 8.800h3" stroke="#6b696c" stroke-width="1.300"/><path d="M7.500 4.500v5M5.700 7.800l1.800 1.900 1.800-1.900" fill="none" stroke="#6b696c" stroke-width="1"/></svg>
<div class="hd" style="left:594.500px">Revenue</div>
<div class="hd" style="left:661px;width:96px">Quantity</div>
<div class="hd" style="left:757px;width:87px">Margin</div>
<div class="hd" style="left:844px;width:106px">Order Date</div>
<div class="hd" style="left:977px;width:42.500px;overflow:hidden;text-align:left">Ship Date</div>
<div class="fi" style="left:346px;width:123px">Enter filter value</div>
<div class="fi" style="left:476px;width:88.500px"><span style="display:inline-block;width:55px;overflow:hidden;vertical-align:top">Enter filter value</span></div>
<div class="fi" style="left:848.500px;width:98.500px"><span style="display:inline-block;width:63px;overflow:hidden;vertical-align:top">Enter filter value</span></div>
<div class="fi" style="left:954px;width:65.500px;border-right:none;border-radius:1px 0 0 1px">Enter filter value</div>
<!-- sliders -->
<div class="sl" style="left:580px;width:70px"></div><div class="hL" style="left:571px"></div><div class="hR" style="left:647.500px"></div>
<div class="sl" style="left:674px;width:71px"></div><div class="hL" style="left:664.500px"></div><div class="hR" style="left:743px"></div>
<div class="sl" style="left:770px;width:62px"></div><div class="hL" style="left:760px"></div><div class="hR" style="left:830px"></div>

<div class="row" style="top:233.50px;height:23.79px;background:#f6f4f7">
<div class="c bl" style="left:8px;width:128.5px">Sean Miller</div>
<div class="c bl" style="left:137.5px;width:94.5px">Home Office</div>
<div class="bar" style="width:49.25px"></div><div class="bv" style="left:290.35px">$22.6K</div>
<div class="c q" style="left:326.5px;width:95px;background:#f7a637;color:#6a4a1a">6</div>
<div class="c m" style="background:#e36457;color:#fff;font-style:italic;font-size:11.5px">-8%</div>
<div class="c d" style="left:509px;width:105.5px">3/18/2021</div>
<div class="c d" style="left:615.5px;width:54px">3/23/2021</div>
</div>
<div class="row" style="top:258.29px;height:23.79px;background:#ffffff">
<div class="c bl" style="left:8px;width:128.5px">Tamara Chand</div>
<div class="c bl" style="left:137.5px;width:94.5px">Corporate</div>
<div class="bar" style="width:49.25px"></div><div class="bv" style="left:290.35px">$17.5K</div>
<div class="c q" style="left:326.5px;width:95px;background:#f8aa42;color:#6a4a1a">5</div>
<div class="c m" style="background:#5f964a;color:#fff">48%</div>
<div class="c d" style="left:509px;width:105.5px">10/2/2023</div>
<div class="c d" style="left:615.5px;width:54px">10/9/2023</div>
</div>
<div class="row" style="top:283.08px;height:23.79px;background:#f6f4f7">
<div class="c bl" style="left:8px;width:128.5px">Raymond Buch</div>
<div class="c bl" style="left:137.5px;width:94.5px">Consumer</div>
<div class="bar" style="width:49.25px"></div><div class="bv" style="left:290.35px">$14.0K</div>
<div class="c q" style="left:326.5px;width:95px;background:#fbb864;color:#6a4a1a">4</div>
<div class="c m" style="background:#5f964a;color:#fff">48%</div>
<div class="c d" style="left:509px;width:105.5px">3/23/2024</div>
<div class="c d" style="left:615.5px;width:54px">3/25/2024</div>
</div>
<div class="row" style="top:307.87px;height:23.79px;background:#ffffff">
<div class="c bl" style="left:8px;width:128.5px">Tom Ashbrook</div>
<div class="c bl" style="left:137.5px;width:94.5px">Home Office</div>
<div class="bar" style="width:43.25px"></div><div class="bv" style="left:284.35px">$11.2K</div>
<div class="c q" style="left:326.5px;width:95px;background:#fbb864;color:#6a4a1a">4</div>
<div class="c m" style="color:#666">35%</div>
<div class="c d" style="left:509px;width:105.5px">10/22/2024</div>
<div class="c d" style="left:615.5px;width:54px">10/24/2024</div>
</div>
<div class="row" style="top:332.66px;height:23.79px;background:#f6f4f7">
<div class="c bl" style="left:8px;width:128.5px">Hunter Lopez</div>
<div class="c bl" style="left:137.5px;width:94.5px">Consumer</div>
<div class="bar" style="width:40.75px"></div><div class="bv" style="left:281.85px">$10.5K</div>
<div class="c q" style="left:326.5px;width:95px;background:#fcbd6e;color:#6a4a1a">3</div>
<div class="c m" style="background:#5f964a;color:#fff">48%</div>
<div class="c d" style="left:509px;width:105.5px">11/17/2024</div>
<div class="c d" style="left:615.5px;width:54px">11/22/2024</div>
</div>
<div class="row" style="top:357.45px;height:23.79px;background:#ffffff">
<div class="c bl" style="left:8px;width:128.5px">Adrian Barton</div>
<div class="c bl" style="left:137.5px;width:94.5px">Consumer</div>
<div class="bar" style="width:38.25px"></div><div class="bv" style="left:279.35px">$9.9K</div>
<div class="c q" style="left:326.5px;width:95px;background:#e4620f;color:#fff">13</div>
<div class="c m" style="background:#5f964a;color:#fff">50%</div>
<div class="c d" style="left:509px;width:105.5px">12/17/2023</div>
<div class="c d" style="left:615.5px;width:54px">12/21/2023</div>
</div>
<div class="row" style="top:382.24px;height:23.79px;background:#f6f4f7">
<div class="c bl" style="left:8px;width:128.5px">Sanjit Chand</div>
<div class="c bl" style="left:137.5px;width:94.5px">Consumer</div>
<div class="bar" style="width:36.75px"></div><div class="bv" style="left:277.85px">$9.4K</div>
<div class="c q" style="left:326.5px;width:95px;background:#f8a939;color:#6a4a1a">5</div>
<div class="c m" style="background:#5f964a;color:#fff">49%</div>
<div class="c d" style="left:509px;width:105.5px">9/23/2021</div>
<div class="c d" style="left:615.5px;width:54px">9/28/2021</div>
</div>
<div class="row" style="top:407.03px;height:23.79px;background:#ffffff">
<div class="c bl" style="left:8px;width:128.5px">Bill Shonely</div>
<div class="c bl" style="left:137.5px;width:94.5px">Corporate</div>
<div class="bar" style="width:35.25px"></div><div class="bv" style="left:276.35px">$9.1K</div>
<div class="c q" style="left:326.5px;width:95px;background:#f89422;color:#6a4a1a">7</div>
<div class="c m" style="color:#666">26%</div>
<div class="c d" style="left:509px;width:105.5px">4/16/2023</div>
<div class="c d" style="left:615.5px;width:54px">4/20/2023</div>
</div>
<div class="row" style="top:431.82px;height:23.79px;background:#f6f4f7">
<div class="c bl" style="left:8px;width:128.5px">Sanjit Engle</div>
<div class="c bl" style="left:137.5px;width:94.5px">Consumer</div>
<div class="bar" style="width:33.75px"></div><div class="bv" style="left:274.85px">$8.7K</div>
<div class="c q" style="left:326.5px;width:95px;background:#f8a939;color:#6a4a1a">5</div>
<div class="c m" style="color:#666">32%</div>
<div class="c d" style="left:509px;width:105.5px">2/2/2023</div>
<div class="c d" style="left:615.5px;width:54px">2/4/2023</div>
</div>
<div class="row" style="top:456.61px;height:23.79px;background:#ffffff">
<div class="c bl" style="left:8px;width:128.5px">Christopher Conant</div>
<div class="c bl" style="left:137.5px;width:94.5px">Consumer</div>
<div class="bar" style="width:32.25px"></div><div class="bv" style="left:273.35px">$8.4K</div>
<div class="c q" style="left:326.5px;width:95px;background:#fbb864;color:#6a4a1a">4</div>
<div class="c m" style="color:#666">13%</div>
<div class="c d" style="left:509px;width:105.5px">5/23/2023</div>
<div class="c d" style="left:615.5px;width:54px">5/27/2023</div>
</div>
<div class="row" style="top:481.40px;height:23.79px;background:#f6f4f7">
<div class="c bl" style="left:8px;width:128.5px">Becky Martin</div>
<div class="c bl" style="left:137.5px;width:94.5px">Consumer</div>
<div class="bar" style="width:31.75px"></div><div class="bv" style="left:272.85px">$8.3K</div>
<div class="c q" style="left:326.5px;width:95px;background:#ee7208;color:#fff">11</div>
<div class="c m" style="background:#e36457;color:#fff;font-style:italic;font-size:11.5px">-16%</div>
<div class="c d" style="left:509px;width:105.5px">9/8/2021</div>
<div class="c d" style="left:615.5px;width:54px">9/12/2021</div>
</div>
<div class="row" style="top:506.19px;height:23.79px;background:#ffffff">
<div class="c bl" style="left:8px;width:128.5px">Ken Lonsdale</div>
<div class="c bl" style="left:137.5px;width:94.5px">Consumer</div>
<div class="bar" style="width:31.75px"></div><div class="bv" style="left:272.85px">$8.2K</div>
<div class="c q" style="left:326.5px;width:95px;background:#f8a939;color:#6a4a1a">5</div>
<div class="c m" style="color:#666">4%</div>
<div class="c d" style="left:509px;width:105.5px">7/25/2021</div>
<div class="c d" style="left:615.5px;width:54px">7/27/2021</div>
</div>
<div class="row" style="top:530.98px;height:23.79px;background:#f6f4f7">
<div class="c bl" style="left:8px;width:128.5px">Grant Thornton</div>
<div class="c bl" style="left:137.5px;width:94.5px">Corporate</div>
<div class="bar" style="width:31.25px"></div><div class="bv" style="left:272.35px">$8.0K</div>
<div class="c q" style="left:326.5px;width:95px;background:#fbb864;color:#6a4a1a">4</div>
<div class="c m" style="background:#e36457;color:#fff;font-style:italic;font-size:11.5px">-48%</div>
<div class="c d" style="left:509px;width:105.5px">11/4/2024</div>
<div class="c d" style="left:615.5px;width:54px">11/4/2024</div>
</div>
<div class="row" style="top:555.77px;height:8px;background:#fff">
<div class="c bl" style="left:8px;width:128.5px"></div><div class="c bl" style="left:137.5px;width:94.5px"></div>
<div class="bar" style="width:30px;height:7px"></div>
<div class="c q" style="left:326.5px;width:95px;background:#fbb864"></div>
<div class="c d" style="left:509px;width:105.5px"></div><div class="c d" style="left:615.5px;width:54px"></div>
</div>

<!-- right strip covering overflow + cursor -->
<div class="abs" style="left:1020px;top:130px;width:2px;height:450px;background:#fff"></div>
<div class="abs" style="left:1023px;top:32px;width:1px;height:548px;background:#e6e4e7"></div>
<div class="abs" style="left:1005.500px;top:396px;width:16.500px;height:16.500px;border-radius:50%;border:4.400px solid #2b8de9;background:#fff"></div>
</body>
</html>
